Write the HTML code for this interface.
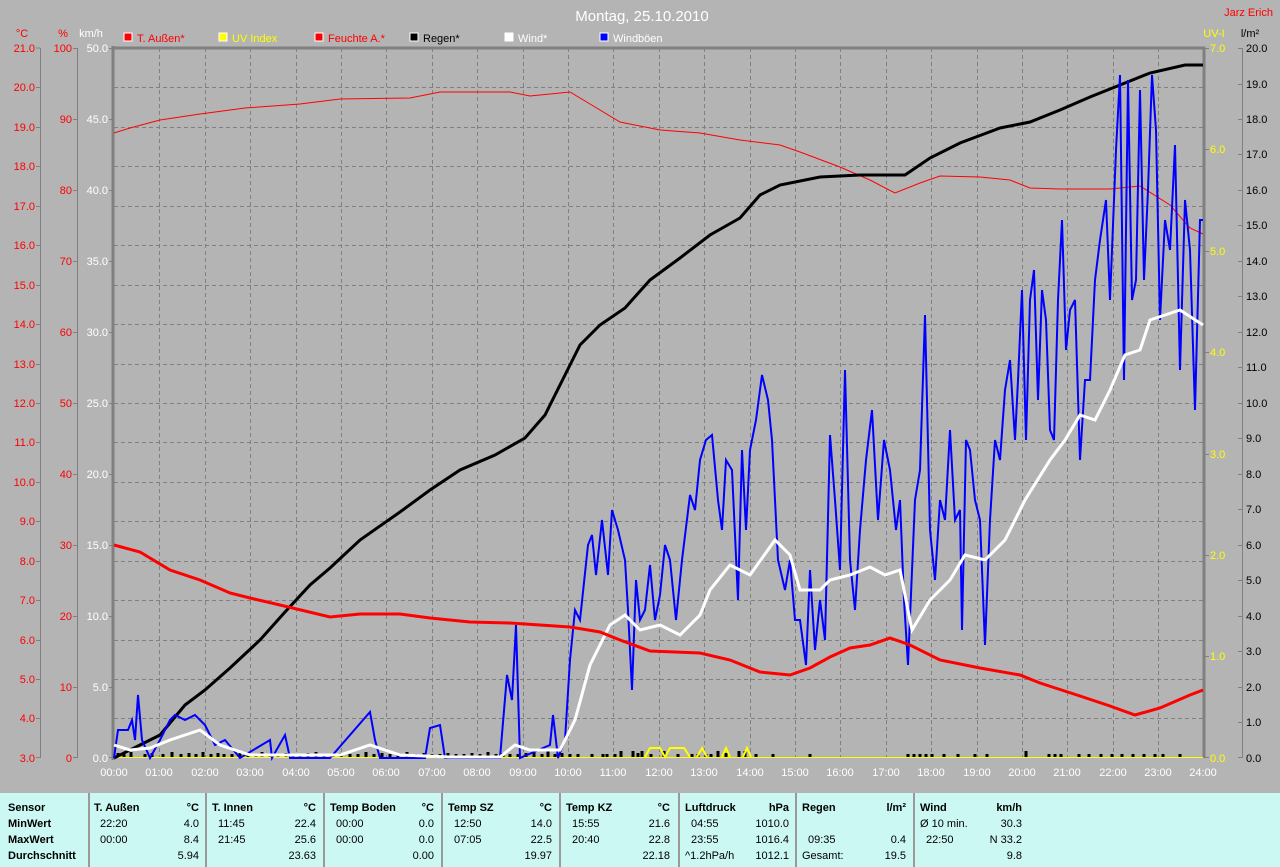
<!DOCTYPE html>
<html><head><meta charset="utf-8"><style>
html,body{margin:0;padding:0;width:1280px;height:867px;overflow:hidden;background:#b4b4b4;font-family:"Liberation Sans",sans-serif}
svg{position:absolute;left:0;top:0}
.tbl{position:absolute;left:0;top:793px;width:1280px;height:74px;background:#ccf8f4;font-size:11px;color:#000}
.col{position:absolute;top:0;height:74px;border-left:2px solid #9a9a9a}
.t{position:absolute;white-space:nowrap}
.b{font-weight:bold}
</style></head><body>
<svg width="1280" height="793" viewBox="0 0 1280 793" font-family="Liberation Sans, sans-serif" font-size="11">
<text x="642" y="21" fill="#fff" font-size="15" text-anchor="middle">Montag, 25.10.2010</text>
<text x="1273" y="16" fill="#f00" text-anchor="end">Jarz Erich</text>
<text x="22" y="37" fill="#f00" text-anchor="middle">°C</text>
<text x="63" y="37" fill="#f00" text-anchor="middle">%</text>
<text x="91" y="37" fill="#fff" text-anchor="middle">km/h</text>
<text x="1214" y="37" fill="#ff0" text-anchor="middle">UV-I</text>
<text x="1250" y="37" fill="#000" text-anchor="middle">l/m²</text>
<!-- legend -->
<g stroke="#fff" stroke-width="1">
<rect x="124" y="33" width="8" height="8" fill="#f00"/><rect x="219" y="33" width="8" height="8" fill="#ff0"/>
<rect x="315" y="33" width="8" height="8" fill="#f00"/><rect x="410" y="33" width="8" height="8" fill="#000"/>
<rect x="505" y="33" width="8" height="8" fill="#fff"/><rect x="600" y="33" width="8" height="8" fill="#00f"/>
</g>
<text x="137" y="42" fill="#f00">T. Außen*</text><text x="232" y="42" fill="#ff0">UV Index</text>
<text x="328" y="42" fill="#f00">Feuchte A.*</text><text x="423" y="42" fill="#000">Regen*</text>
<text x="518" y="42" fill="#fff">Wind*</text><text x="613" y="42" fill="#fff">Windböen</text>
<!-- grid -->
<g stroke="#808080" stroke-dasharray="4,3" stroke-width="1">
<path d="M114 87.5H1203M114 127.5H1203M114 166.5H1203M114 206.5H1203M114 245.5H1203M114 285.5H1203M114 324.5H1203M114 364.5H1203M114 403.5H1203M114 442.5H1203M114 482.5H1203M114 521.5H1203M114 561.5H1203M114 600.5H1203M114 640.5H1203M114 679.5H1203M114 718.5H1203"/>
<path d="M159.5 48V758M205.5 48V758M250.5 48V758M296.5 48V758M341.5 48V758M386.5 48V758M432.5 48V758M477.5 48V758M523.5 48V758M568.5 48V758M613.5 48V758M659.5 48V758M704.5 48V758M750.5 48V758M795.5 48V758M840.5 48V758M886.5 48V758M931.5 48V758M977.5 48V758M1022.5 48V758M1067.5 48V758M1113.5 48V758M1158.5 48V758"/>
</g>
<!-- frame -->
<path d="M113 48H1204V758" stroke="#808080" stroke-width="3" fill="none"/>
<path d="M113 46V760" stroke="#808080" stroke-width="3"/>
<!-- left axes -->
<g stroke="#808080" stroke-width="1" fill="none">
<path d="M40.5 48V758M77.5 48V758M1242.5 48V758"/>
<path d="M36 48h4M36 87.5h4M36 127.5h4M36 166.5h4M36 206.5h4M36 245.5h4M36 285.5h4M36 324.5h4M36 364.5h4M36 403.5h4M36 442.5h4M36 482.5h4M36 521.5h4M36 561.5h4M36 600.5h4M36 640.5h4M36 679.5h4M36 718.5h4M36 757.5h4"/>
<path d="M73 48.5h4M73 119.5h4M73 190.5h4M73 261.5h4M73 332.5h4M73 403.5h4M73 474.5h4M73 545.5h4M73 616.5h4M73 687.5h4M73 757.5h4"/>
<path d="M109 48.5h4M109 119.5h4M109 190.5h4M109 261.5h4M109 332.5h4M109 403.5h4M109 474.5h4M109 545.5h4M109 616.5h4M109 687.5h4M109 757.5h4"/>
<path d="M1205 48.5h4M1205 149.5h4M1205 251.5h4M1205 352.5h4M1205 454.5h4M1205 555.5h4M1205 656.5h4M1205 757.5h4"/>
<path d="M1238 48.5h4M1238 84.5h4M1238 119.5h4M1238 154.5h4M1238 190.5h4M1238 225.5h4M1238 261.5h4M1238 296.5h4M1238 332.5h4M1238 367.5h4M1238 403.5h4M1238 438.5h4M1238 474.5h4M1238 509.5h4M1238 545.5h4M1238 580.5h4M1238 616.5h4M1238 651.5h4M1238 687.5h4M1238 722.5h4M1238 757.5h4"/>
</g>
<g fill="#f00" text-anchor="end">
<text x="35" y="52">21.0</text><text x="35" y="91">20.0</text><text x="35" y="131">19.0</text><text x="35" y="170">18.0</text><text x="35" y="210">17.0</text><text x="35" y="249">16.0</text><text x="35" y="289">15.0</text><text x="35" y="328">14.0</text><text x="35" y="368">13.0</text><text x="35" y="407">12.0</text><text x="35" y="446">11.0</text><text x="35" y="486">10.0</text><text x="35" y="525">9.0</text><text x="35" y="565">8.0</text><text x="35" y="604">7.0</text><text x="35" y="644">6.0</text><text x="35" y="683">5.0</text><text x="35" y="722">4.0</text><text x="35" y="762">3.0</text>
<text x="72" y="52">100</text><text x="72" y="123">90</text><text x="72" y="194">80</text><text x="72" y="265">70</text><text x="72" y="336">60</text><text x="72" y="407">50</text><text x="72" y="478">40</text><text x="72" y="549">30</text><text x="72" y="620">20</text><text x="72" y="691">10</text><text x="72" y="762">0</text>
</g>
<g fill="#fff" text-anchor="end">
<text x="108" y="52">50.0</text><text x="108" y="123">45.0</text><text x="108" y="194">40.0</text><text x="108" y="265">35.0</text><text x="108" y="336">30.0</text><text x="108" y="407">25.0</text><text x="108" y="478">20.0</text><text x="108" y="549">15.0</text><text x="108" y="620">10.0</text><text x="108" y="691">5.0</text><text x="108" y="762">0.0</text>
</g>
<g fill="#ff0">
<text x="1210" y="52">7.0</text><text x="1210" y="153">6.0</text><text x="1210" y="255">5.0</text><text x="1210" y="356">4.0</text><text x="1210" y="458">3.0</text><text x="1210" y="559">2.0</text><text x="1210" y="660">1.0</text><text x="1210" y="762">0.0</text>
</g>
<g fill="#000">
<text x="1246" y="52">20.0</text><text x="1246" y="88">19.0</text><text x="1246" y="123">18.0</text><text x="1246" y="158">17.0</text><text x="1246" y="194">16.0</text><text x="1246" y="229">15.0</text><text x="1246" y="265">14.0</text><text x="1246" y="300">13.0</text><text x="1246" y="336">12.0</text><text x="1246" y="371">11.0</text><text x="1246" y="407">10.0</text><text x="1246" y="442">9.0</text><text x="1246" y="478">8.0</text><text x="1246" y="513">7.0</text><text x="1246" y="549">6.0</text><text x="1246" y="584">5.0</text><text x="1246" y="620">4.0</text><text x="1246" y="655">3.0</text><text x="1246" y="691">2.0</text><text x="1246" y="726">1.0</text><text x="1246" y="762">0.0</text>
</g>
<g fill="#fff" text-anchor="middle">
<text x="114" y="776">00:00</text><text x="159" y="776">01:00</text><text x="205" y="776">02:00</text><text x="250" y="776">03:00</text><text x="296" y="776">04:00</text><text x="341" y="776">05:00</text><text x="386" y="776">06:00</text><text x="432" y="776">07:00</text><text x="477" y="776">08:00</text><text x="523" y="776">09:00</text><text x="568" y="776">10:00</text><text x="613" y="776">11:00</text><text x="659" y="776">12:00</text><text x="704" y="776">13:00</text><text x="750" y="776">14:00</text><text x="795" y="776">15:00</text><text x="840" y="776">16:00</text><text x="886" y="776">17:00</text><text x="931" y="776">18:00</text><text x="977" y="776">19:00</text><text x="1022" y="776">20:00</text><text x="1067" y="776">21:00</text><text x="1113" y="776">22:00</text><text x="1158" y="776">23:00</text><text x="1203" y="776">24:00</text>
</g>
<!-- rain bars -->
<path d="M114 757.5H1203" stroke="#ff0" stroke-width="1"/>
<path d="M118 757v-4M124 757v-3M131 757v-5M145 757v-3M152 757v-4M163 757v-3M172 757v-5M181 757v-3M189 757v-4M196 757v-3M203 757v-5M211 757v-3M218 757v-4M224 757v-3M232 757v-3M240 757v-4M248 757v-3M256 757v-3M262 757v-5M270 757v-3M278 757v-3M286 757v-4M293 757v-3M300 757v-3M308 757v-4M316 757v-5M324 757v-3M333 757v-3M341 757v-4M350 757v-3M358 757v-3M366 757v-5M374 757v-3M382 757v-4M390 757v-3M398 757v-3M407 757v-5M416 757v-3M424 757v-4M432 757v-3M440 757v-3M448 757v-4M456 757v-3M464 757v-3M472 757v-4M480 757v-3M488 757v-5M496 757v-3M503 757v-4M510 757v-3M518 757v-3M526 757v-4M534 757v-5M542 757v-3M548 757v-6M555 757v-3M562 757v-4M570 757v-3M578 757v-3M592 757v-3M603 757v-3M607 757v-3M615 757v-3M621 757v-6M633 757v-6M638 757v-4M642 757v-6M651 757v-3M664 757v-6M678 757v-3M692 757v-3M698 757v-3M706 757v-3M711 757v-3M718 757v-6M726 757v-4M739 757v-6M745 757v-6M756 757v-3M773 757v-3M810 757v-3M908 757v-3M914 757v-3M920 757v-3M926 757v-3M932 757v-3M944 757v-3M958 757v-3M975 757v-3M987 757v-3M1026 757v-6M1049 757v-3M1055 757v-3M1061 757v-3M1079 757v-3M1089 757v-3M1101 757v-3M1112 757v-3M1122 757v-3M1133 757v-3M1144 757v-3M1155 757v-3M1163 757v-3M1180 757v-3" stroke="#000" stroke-width="3"/>
<path d="M645 757L650 748H660L665 757L670 748H684L690 757M697 757L702 748L707 757M722 757L726 748L730 757M743 757L747 748L751 757" stroke="#ff0" stroke-width="2" fill="none"/>
<!-- humidity -->
<polyline fill="none" stroke="#f00" stroke-width="1" points="114,133 130,128 160,120 200,114 245,108 300,104 340,99 410,98 440,92 510,92 530,96 570,92 590,104 620,122 660,130 700,133 740,140 780,145 800,152 840,167 870,180 895,193 920,183 940,176 980,177 1010,180 1030,188 1060,189 1110,189 1140,186 1170,205 1190,228 1203,234"/>
<!-- rain -->
<polyline fill="none" stroke="#000" stroke-width="3" points="114,758 140,745 160,735 185,705 205,690 230,668 260,640 285,612 310,585 330,568 360,540 400,512 430,490 460,470 495,455 525,438 545,415 565,375 580,345 600,325 625,308 650,280 680,258 710,235 740,218 760,195 780,185 820,177 860,175 905,175 930,158 960,143 1000,128 1030,122 1060,110 1090,97 1120,85 1150,73 1185,65 1203,65"/>
<!-- gusts -->
<polyline fill="none" stroke="#00f" stroke-width="2" points="114,758 118,730 128,730 132,720 135,740 138,695 142,740 150,758 160,740 170,720 175,715 185,720 195,715 205,725 215,745 225,740 240,758 270,740 272,758 285,735 290,758 330,758 370,712 375,740 380,758 425,758 430,728 440,725 445,758 500,758 507,675 512,700 516,625 520,758 550,745 553,715 558,758 565,740 570,660 575,610 580,620 588,545 592,535 596,575 602,520 608,575 612,510 618,530 625,560 628,610 632,690 636,580 640,620 645,610 650,565 655,620 660,595 665,545 670,560 676,620 682,560 690,495 695,510 700,460 706,440 712,435 718,500 722,530 726,460 732,470 738,600 742,450 746,530 750,450 756,420 762,375 768,400 772,440 778,560 785,590 790,560 795,620 800,620 806,665 810,570 815,650 820,600 825,640 830,435 835,500 840,570 845,370 850,560 855,610 860,530 866,460 872,410 878,520 884,440 890,470 896,530 900,500 904,600 908,665 915,500 920,470 925,315 930,530 935,580 940,500 945,520 950,430 955,520 960,510 962,630 966,440 970,450 975,500 980,520 985,645 990,520 995,440 1000,460 1005,390 1010,360 1015,440 1018,380 1022,290 1026,440 1030,300 1034,270 1038,400 1042,290 1046,320 1050,430 1054,440 1058,300 1062,220 1066,350 1070,310 1075,300 1080,460 1085,380 1090,380 1095,280 1100,240 1106,200 1110,300 1116,150 1120,75 1124,380 1128,80 1132,300 1136,280 1140,90 1144,280 1148,190 1152,75 1156,130 1160,320 1165,220 1170,250 1175,145 1180,370 1185,200 1190,250 1195,410 1200,220 1203,220"/>
<!-- wind -->
<polyline fill="none" stroke="#fff" stroke-width="3" points="114,745 130,750 150,748 170,740 200,730 220,745 250,755 300,755 340,755 370,745 400,755 450,757 500,757 515,745 530,750 560,750 575,720 590,665 610,625 625,615 640,630 660,625 680,635 700,615 710,590 730,565 750,575 775,540 790,555 800,590 820,590 830,580 850,575 870,567 885,575 900,570 912,630 930,600 950,580 965,555 985,560 1005,540 1025,500 1050,460 1065,440 1080,415 1095,420 1110,390 1125,355 1140,350 1150,320 1165,315 1180,310 1203,325"/>
<!-- temp -->
<polyline fill="none" stroke="#f00" stroke-width="3" points="114,545 140,552 170,570 200,580 230,593 250,598 280,605 330,617 360,614 400,614 430,618 470,622 510,623 570,627 600,632 620,640 650,651 700,653 730,660 760,672 790,675 810,668 830,657 850,648 870,645 890,638 910,645 940,660 980,668 1020,675 1040,683 1080,696 1110,706 1135,715 1160,708 1190,695 1203,690"/>
</svg>
<div class="tbl">
<div class="col" style="left:88px"></div><div class="col" style="left:205px"></div><div class="col" style="left:323px"></div><div class="col" style="left:441px"></div><div class="col" style="left:559px"></div><div class="col" style="left:678px"></div><div class="col" style="left:795px"></div><div class="col" style="left:913px"></div>
<div class="t b" style="left:8px;top:9px">Sensor</div><div class="t b" style="left:8px;top:25px">MinWert</div><div class="t b" style="left:8px;top:41px">MaxWert</div><div class="t b" style="left:8px;top:57px">Durchschnitt</div>

<div class="t b" style="left:94px;top:9px">T. Außen</div><div class="t b" style="right:1081px;top:9px">°C</div>
<div class="t" style="left:100px;top:25px">22:20</div><div class="t" style="right:1081px;top:25px">4.0</div>
<div class="t" style="left:100px;top:41px">00:00</div><div class="t" style="right:1081px;top:41px">8.4</div>
<div class="t" style="right:1081px;top:57px">5.94</div>

<div class="t b" style="left:212px;top:9px">T. Innen</div><div class="t b" style="right:964px;top:9px">°C</div>
<div class="t" style="left:218px;top:25px">11:45</div><div class="t" style="right:964px;top:25px">22.4</div>
<div class="t" style="left:218px;top:41px">21:45</div><div class="t" style="right:964px;top:41px">25.6</div>
<div class="t" style="right:964px;top:57px">23.63</div>

<div class="t b" style="left:330px;top:9px">Temp Boden</div><div class="t b" style="right:846px;top:9px">°C</div>
<div class="t" style="left:336px;top:25px">00:00</div><div class="t" style="right:846px;top:25px">0.0</div>
<div class="t" style="left:336px;top:41px">00:00</div><div class="t" style="right:846px;top:41px">0.0</div>
<div class="t" style="right:846px;top:57px">0.00</div>

<div class="t b" style="left:448px;top:9px">Temp SZ</div><div class="t b" style="right:728px;top:9px">°C</div>
<div class="t" style="left:454px;top:25px">12:50</div><div class="t" style="right:728px;top:25px">14.0</div>
<div class="t" style="left:454px;top:41px">07:05</div><div class="t" style="right:728px;top:41px">22.5</div>
<div class="t" style="right:728px;top:57px">19.97</div>

<div class="t b" style="left:566px;top:9px">Temp KZ</div><div class="t b" style="right:610px;top:9px">°C</div>
<div class="t" style="left:572px;top:25px">15:55</div><div class="t" style="right:610px;top:25px">21.6</div>
<div class="t" style="left:572px;top:41px">20:40</div><div class="t" style="right:610px;top:41px">22.8</div>
<div class="t" style="right:610px;top:57px">22.18</div>

<div class="t b" style="left:685px;top:9px">Luftdruck</div><div class="t b" style="right:491px;top:9px">hPa</div>
<div class="t" style="left:691px;top:25px">04:55</div><div class="t" style="right:491px;top:25px">1010.0</div>
<div class="t" style="left:691px;top:41px">23:55</div><div class="t" style="right:491px;top:41px">1016.4</div>
<div class="t" style="left:685px;top:57px">^1.2hPa/h</div><div class="t" style="right:491px;top:57px">1012.1</div>

<div class="t b" style="left:802px;top:9px">Regen</div><div class="t b" style="right:374px;top:9px">l/m²</div>
<div class="t" style="left:808px;top:41px">09:35</div><div class="t" style="right:374px;top:41px">0.4</div>
<div class="t" style="left:802px;top:57px">Gesamt:</div><div class="t" style="right:374px;top:57px">19.5</div>

<div class="t b" style="left:920px;top:9px">Wind</div><div class="t b" style="right:258px;top:9px">km/h</div>
<div class="t" style="left:920px;top:25px">Ø 10 min.</div><div class="t" style="right:258px;top:25px">30.3</div>
<div class="t" style="left:926px;top:41px">22:50</div><div class="t" style="right:258px;top:41px">N 33.2</div>
<div class="t" style="right:258px;top:57px">9.8</div>
</div>
</body></html>
